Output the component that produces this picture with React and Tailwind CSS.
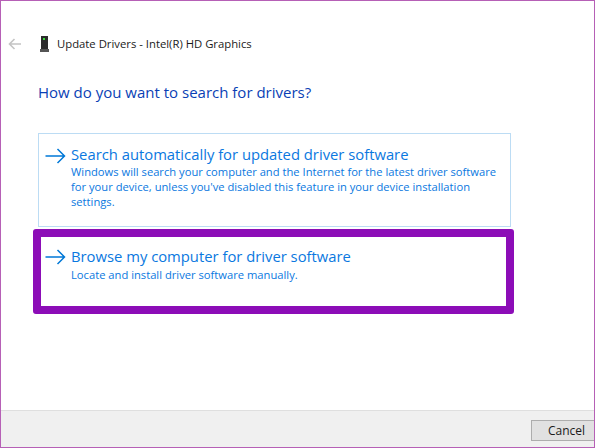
import React from 'react';

const Arrow = () => (
  <svg width="21" height="16" viewBox="0 0 21 16" fill="none" stroke="#0078d7" strokeWidth="1.5" className="shrink-0">
    <path d="M0.5 8H19.5M12.5 1L19.5 8L12.5 15" />
  </svg>
);

const DriverIcon = () => (
  <svg width="9" height="16" viewBox="0 0 9 16" className="shrink-0">
    <rect x="1" y="0" width="7" height="13" fill="#2b2b2b" />
    <rect x="3" y="2" width="2" height="2" fill="#3ddc3d" />
    <rect x="0" y="13" width="9" height="3" fill="#555" />
  </svg>
);

const BackArrow = () => (
  <svg width="13" height="12" viewBox="0 0 13 12" fill="none" stroke="#c4c4c4" strokeWidth="1.6" className="shrink-0">
    <path d="M13 6H1.5M6.5 1L1.5 6L6.5 11" />
  </svg>
);

const App = () => {
  return (
    <div className="w-[595px] h-[448px] flex flex-col bg-white border border-[#b660b6] font-['Open_Sans','Noto_Sans',sans-serif] overflow-hidden">
      <div className="flex-1 flex flex-col">
        {/* Header */}
        <div className="flex items-center h-4 mt-[35px] ml-[7px]">
          <BackArrow />
          <div className="ml-[19px]"><DriverIcon /></div>
          <span className="ml-[8px] text-[11.3px] text-[#1a1a1a] whitespace-nowrap">Update Drivers - Intel(R) HD Graphics</span>
        </div>

        <h1 className="mt-[30px] ml-[37px] text-[15px] leading-5 font-normal text-[#0a3fb5]">How do you want to search for drivers?</h1>

        {/* Options */}
        <div className="mt-[31px] ml-[37px] w-[473px] h-[94px] border border-[#bcdcf4] pl-[6px] pt-[10px] flex gap-[5px]">
          <div className="mt-[4px]"><Arrow /></div>
          <div>
            <p className="text-[14.8px] leading-5 text-[#0a78e0] whitespace-nowrap">Search automatically for updated driver software</p>
            <p className="text-[11.2px] leading-[15px] text-[#0a78e0] w-[432px]">Windows will search your computer and the Internet for the latest driver software for your device, unless you've disabled this feature in your device installation settings.</p>
          </div>
        </div>
        <div className="mt-[2px] ml-[32px] w-[481px] h-[85px] border-[8px] border-[#8c0db7] rounded-[3px] pl-[4px] flex gap-[5px]">
          <div className="mt-[12px]"><Arrow /></div>
          <div className="pt-[9px]">
            <p className="text-[14.8px] leading-5 text-[#0a78e0] whitespace-nowrap">Browse my computer for driver software</p>
            <p className="text-[11.2px] leading-[15px] text-[#0a78e0] mt-px">Locate and install driver software manually.</p>
          </div>
        </div>
      </div>

      {/* Footer */}
      <div className="h-[37px] shrink-0 bg-[#f0f0f0] border-t border-[#dfdfdf] flex justify-end pt-[9px]">
        <button className="w-[63px] h-[21px] pl-[7px] bg-[#e1e1e1] border border-[#adadad] border-r-0 text-[12px] text-[#1a1a1a] leading-none">Cancel</button>
      </div>
    </div>
  );
};

export default App;
